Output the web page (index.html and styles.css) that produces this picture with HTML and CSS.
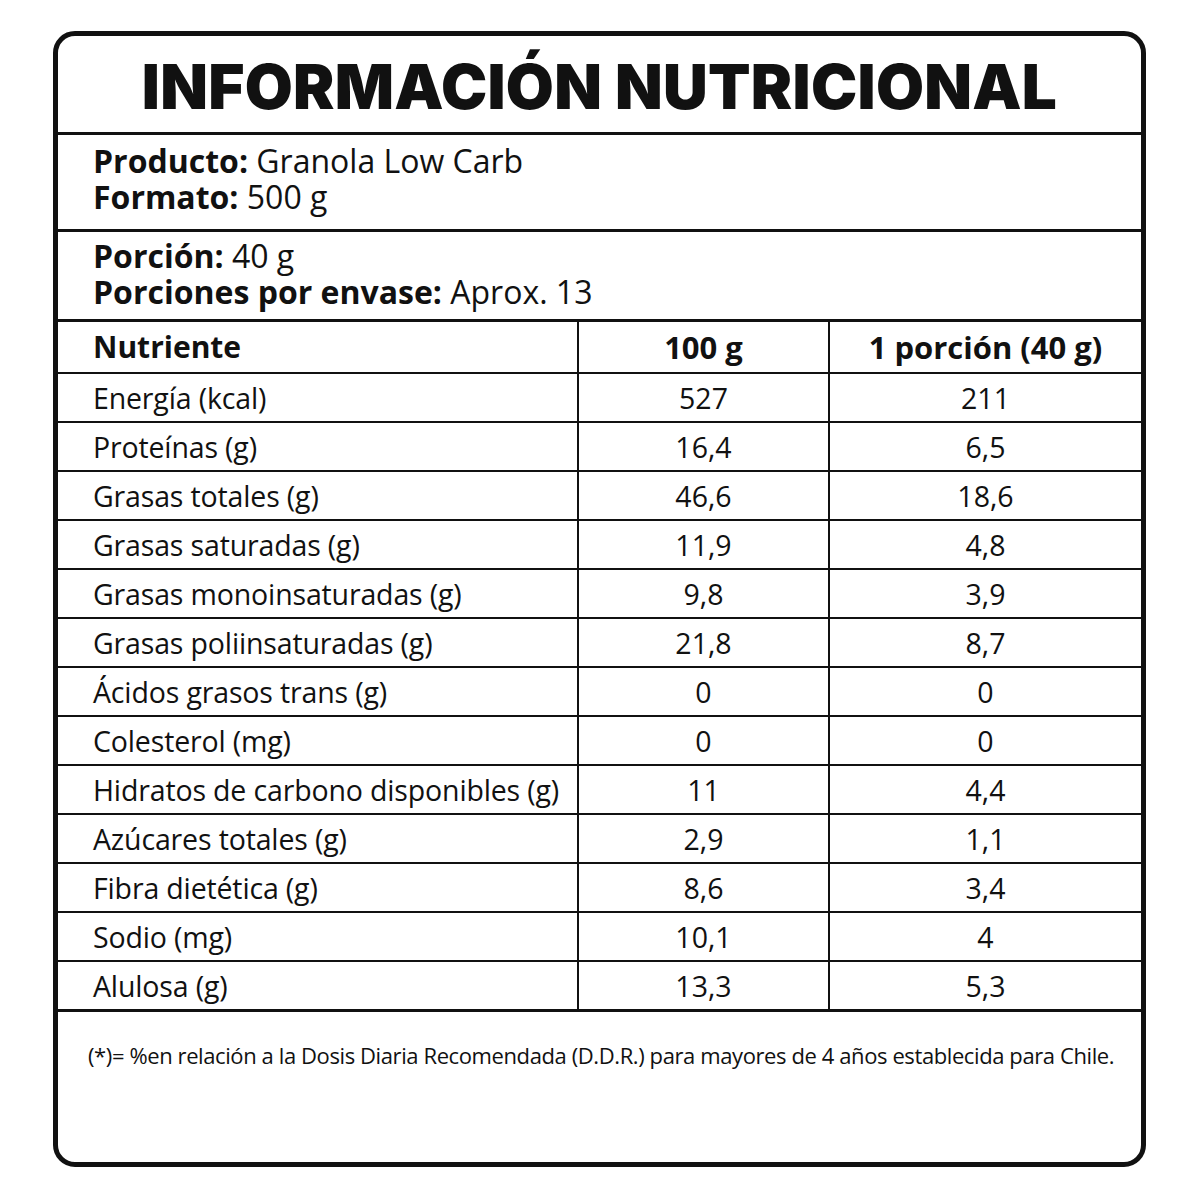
FILE: index.html
```html
<!DOCTYPE html>
<html lang="es">
<head>
<meta charset="utf-8">
<title>Información Nutricional</title>
<link rel="stylesheet" href="styles.css">
</head>
<body>
<div class="label">
  <div class="title">INFORMACIÓN NUTRICIONAL</div>
  <div class="info">
    <div class="line"><b>Producto:</b> Granola Low Carb</div>
    <div class="line"><b>Formato:</b> 500 g</div>
  </div>
  <div class="info info2">
    <div class="line"><b>Porción:</b> 40 g</div>
    <div class="line"><b>Porciones por envase:</b> Aprox. 13</div>
  </div>
  <table class="nt">
    <colgroup><col class="c1"><col class="c2"><col class="c3"></colgroup>
    <thead>
      <tr><th class="name">Nutriente</th><th>100 g</th><th>1 porción (40 g)</th></tr>
    </thead>
    <tbody>
      <tr><td class="name">Energía (kcal)</td><td>527</td><td>211</td></tr>
      <tr><td class="name">Proteínas (g)</td><td>16,4</td><td>6,5</td></tr>
      <tr><td class="name">Grasas totales (g)</td><td>46,6</td><td>18,6</td></tr>
      <tr><td class="name">Grasas saturadas (g)</td><td>11,9</td><td>4,8</td></tr>
      <tr><td class="name">Grasas monoinsaturadas (g)</td><td>9,8</td><td>3,9</td></tr>
      <tr><td class="name">Grasas poliinsaturadas (g)</td><td>21,8</td><td>8,7</td></tr>
      <tr><td class="name">Ácidos grasos trans (g)</td><td>0</td><td>0</td></tr>
      <tr><td class="name">Colesterol (mg)</td><td>0</td><td>0</td></tr>
      <tr><td class="name">Hidratos de carbono disponibles (g)</td><td>11</td><td>4,4</td></tr>
      <tr><td class="name">Azúcares totales (g)</td><td>2,9</td><td>1,1</td></tr>
      <tr><td class="name">Fibra dietética (g)</td><td>8,6</td><td>3,4</td></tr>
      <tr><td class="name">Sodio (mg)</td><td>10,1</td><td>4</td></tr>
      <tr><td class="name">Alulosa (g)</td><td>13,3</td><td>5,3</td></tr>
    </tbody>
  </table>
  <div class="foot">(*)= %en relación a la Dosis Diaria Recomendada (D.D.R.) para mayores de 4 años establecida para Chile.</div>
</div>
</body>
</html>
```
FILE: styles.css
```css
html, body {
  margin: 0;
  padding: 0;
  background: #ffffff;
}
body {
  width: 1200px;
  height: 1200px;
  color: #111111;
  font-family: "Open Sans", "Noto Sans", sans-serif;
}
.label {
  box-sizing: border-box;
  margin: 31px 0 0 53px;
  width: 1093px;
  height: 1136px;
  border: 5px solid #111111;
  border-radius: 22px;
  display: flex;
  flex-direction: column;
  overflow: hidden;
}
.title {
  height: 92px;
  border-bottom: 3px solid #111111;
  display: flex;
  align-items: center;
  justify-content: center;
  font-family: "Inter", sans-serif;
  font-weight: 900;
  font-size: 62px;
  letter-spacing: 0.3px;
  padding-top: 4px;
}
.info {
  height: 97px;
  box-sizing: border-box;
  border-bottom: 3px solid #111111;
  padding: 8px 0 0 35px;
  font-size: 32px;
  line-height: 36px;
}
.info2 {
  height: 90px;
  padding-top: 6px;
}
.info b {
  font-weight: 700;
}
.nt {
  width: 100%;
  border-collapse: collapse;
  table-layout: fixed;
  font-size: 28.5px;
}
.c1 { width: 520px; }
.c2 { width: 251px; }
.nt th, .nt td {
  border: 2px solid #111111;
  text-align: center;
  padding: 0;
  height: 47px;
  line-height: 30px;
}
.nt th {
  height: 50px;
  font-weight: 700;
  font-size: 31px;
}
.nt tr > :first-child { border-left: none; }
.nt tr > :last-child { border-right: none; }
.nt thead tr th { border-top: none; }
.nt tbody tr:last-child td { border-bottom: 3px solid #111111; }
.nt .name {
  text-align: left;
  padding-left: 35px;
}
.nt td.name {
  letter-spacing: -0.15px;
}
.nt th.name {
  font-size: 30px;
}
.foot {
  flex: 1;
  padding: 28px 0 0 30px;
  font-size: 22px;
  line-height: 30px;
  letter-spacing: -0.4px;
}
```
